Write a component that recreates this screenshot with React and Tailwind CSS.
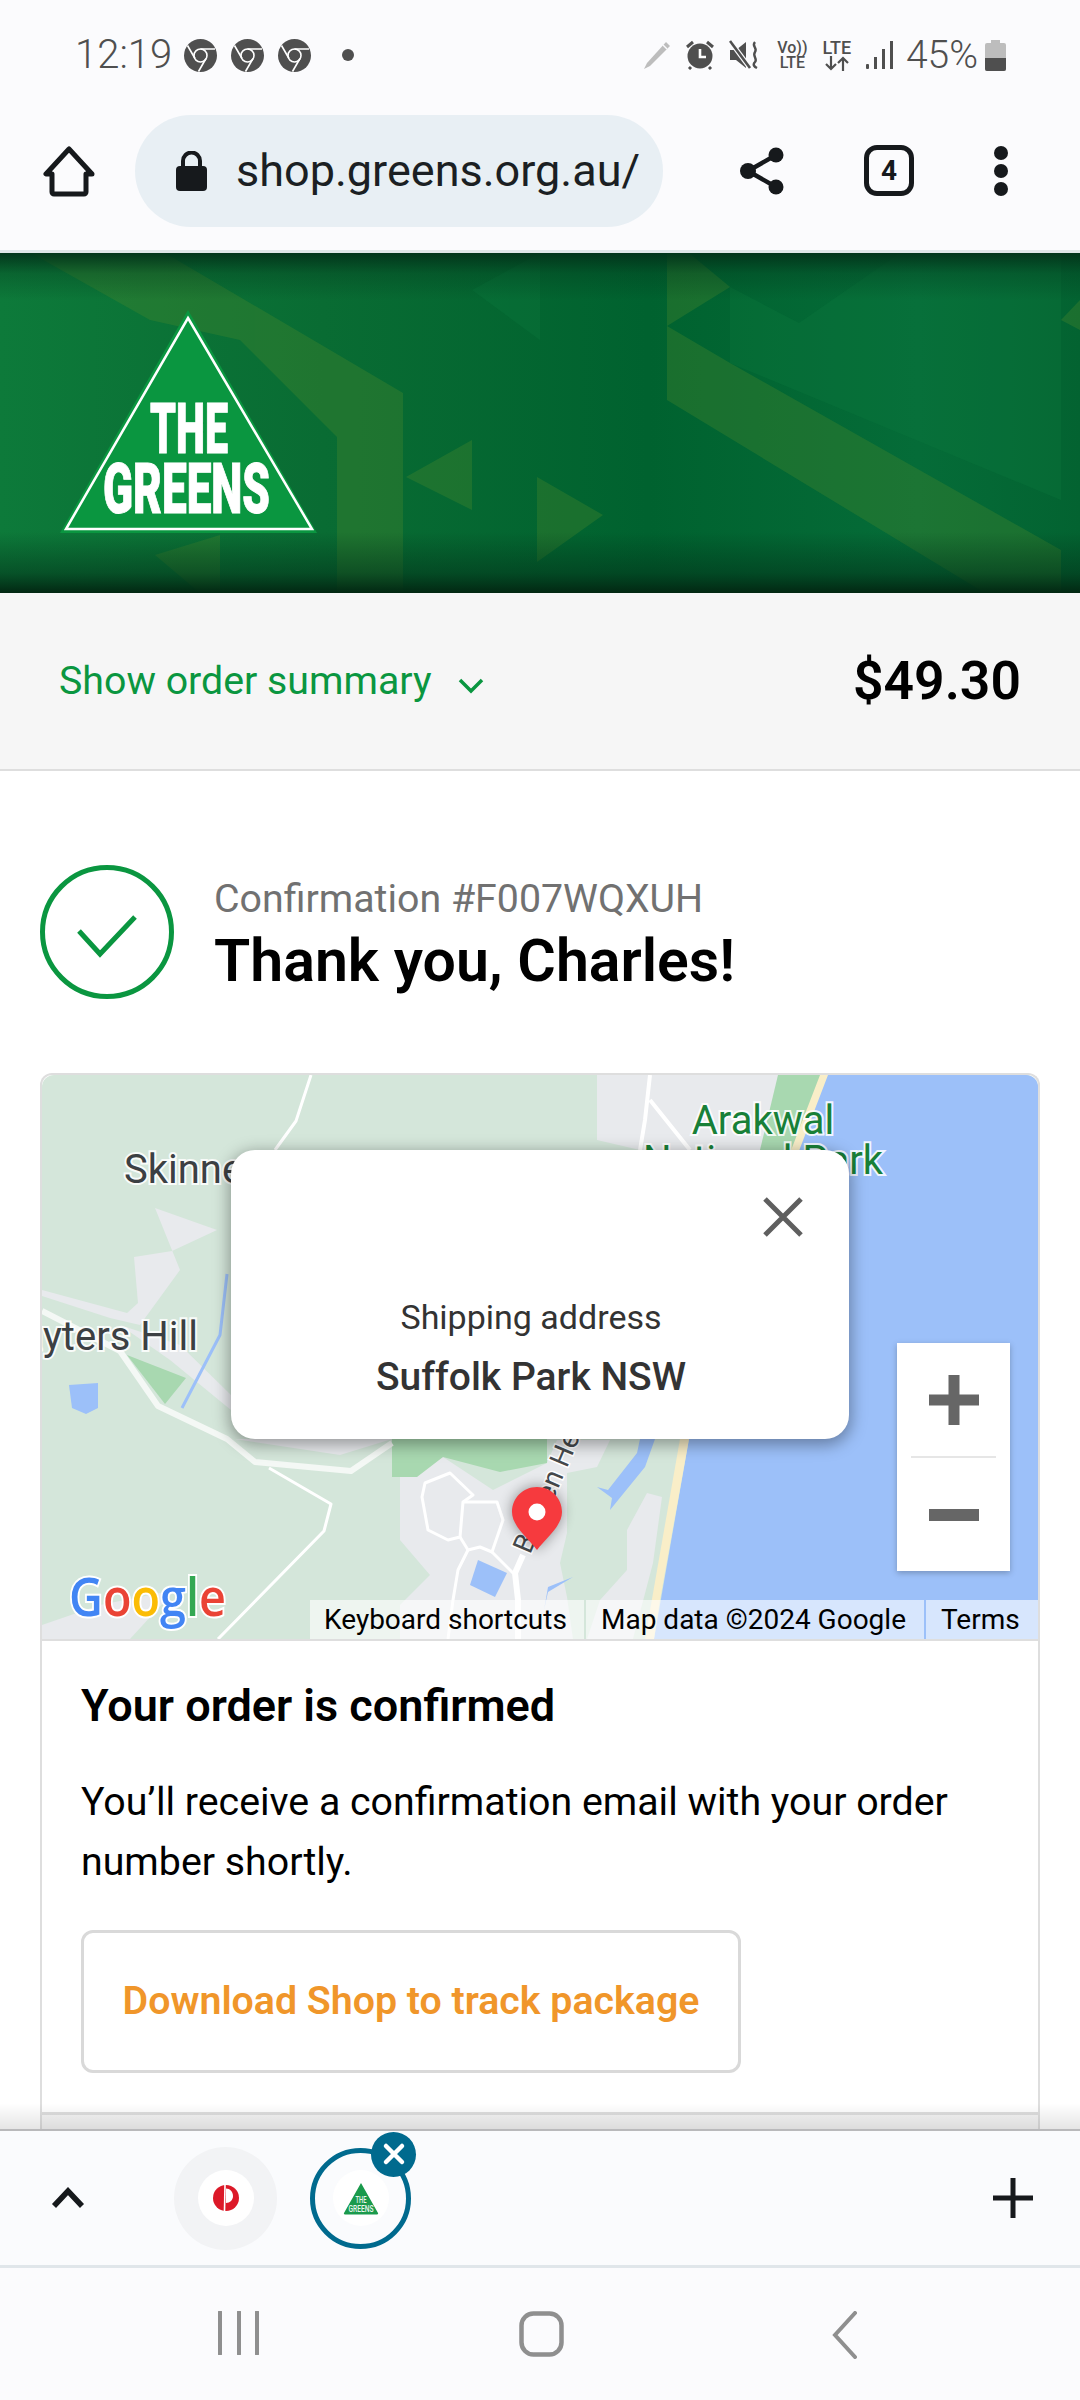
import React from "react";

const FONT = { fontFamily: "Roboto, sans-serif" };

function Chrome() {
  return (
    <svg width="33" height="33" viewBox="0 0 33 33" className="block shrink-0">
      <circle cx="16.5" cy="16.5" r="16.5" fill="#4f4f4f" />
      <circle cx="16.5" cy="16.5" r="6.5" fill="none" stroke="#fff" strokeWidth="1.6" />
      <path d="M16.5 10H31M22 19.5L14.5 32.5M11 19.5L3.5 6.5" stroke="#fff" strokeWidth="1.6" fill="none" />
    </svg>
  );
}

function StatusRight() {
  return (
    <div className="flex items-center">
      <svg width="30" height="30" viewBox="0 0 30 30" className="block">
        <path d="M24 2l4 4L8 26l-6 3 3-6z" fill="#bdbdbd" />
        <path d="M21 5l4 4" stroke="#fbfbfd" strokeWidth="1.5" />
      </svg>
      <svg width="30" height="30" viewBox="0 0 30 30" className="block ml-[13px]">
        <circle cx="15" cy="16" r="12.5" fill="#4f4f4f" />
        <path d="M15 9v8h6" stroke="#fff" strokeWidth="2.6" fill="none" />
        <path d="M2 7l6-5M28 7l-6-5" stroke="#4f4f4f" strokeWidth="3" />
        <path d="M6 27l-2 2M24 27l2 2" stroke="#4f4f4f" strokeWidth="3" />
      </svg>
      <svg width="30" height="30" viewBox="0 0 30 30" className="block ml-[14px]">
        <path d="M1 10h6l10-8v26l-10-8H1z" fill="#4f4f4f" />
        <path d="M1 1l20 27" stroke="#fbfbfd" strokeWidth="5" />
        <path d="M1 1l20 27" stroke="#4f4f4f" strokeWidth="2.6" />
        <path d="M26 2c-4 4 3 6 0 10s3 7 0 10 0 5 2 6" stroke="#4f4f4f" strokeWidth="2.4" fill="none" />
      </svg>
      <div className="ml-[17px] flex w-[33px] flex-col items-center text-[#4f4f4f] leading-[15px] text-[16px] font-medium">
        <span className="whitespace-nowrap">Vo))</span>
        <span>LTE</span>
      </div>
      <div className="ml-[11px] flex w-[34px] flex-col items-center text-[#4f4f4f]">
        <span className="text-[18px] font-medium leading-[17px]">LTE</span>
        <svg width="26" height="15" viewBox="0 0 26 15" className="block">
          <path d="M7 0v13M2 8l5 5 5-5M19 15V2M14 7l5-5 5 5" stroke="#4f4f4f" strokeWidth="2.2" fill="none" />
        </svg>
      </div>
      <svg width="27" height="30" viewBox="0 0 27 30" className="block ml-[12px]">
        <rect x="0" y="24" width="3" height="5" rx="1" fill="#4f4f4f" />
        <rect x="8" y="17" width="3" height="12" fill="#4f4f4f" />
        <rect x="16" y="9" width="3" height="20" fill="#4f4f4f" />
        <rect x="24" y="1" width="3" height="28" fill="#4f4f4f" />
      </svg>
      <span className="ml-[13px] text-[39px] font-light leading-none text-[#4f4f4f]">45%</span>
      <svg width="21" height="31" viewBox="0 0 21 31" className="block ml-[7px]">
        <path d="M6 0h9v3h4a2 2 0 012 2v24a2 2 0 01-2 2H2a2 2 0 01-2-2V5a2 2 0 012-2h4z" fill="#bdbdbd" />
        <path d="M0 18h21v11a2 2 0 01-2 2H2a2 2 0 01-2-2z" fill="#4f4f4f" />
      </svg>
    </div>
  );
}

function Toolbar() {
  return (
    <div className="flex h-[173px] items-center border-b-[3px] border-[#dfe7e8] pt-[11px]">
      <svg width="52" height="52" viewBox="0 0 52 52" className="ml-[43px] block shrink-0">
        <path d="M26 4L3 29h6v18a2 2 0 002 2h30a2 2 0 002-2V29h6z" fill="none" stroke="#16191c" strokeWidth="5" strokeLinejoin="round" />
      </svg>
      <div className="ml-[40px] flex h-[112px] w-[528px] shrink-0 items-center rounded-full bg-[#e8eff4]">
        <svg width="31" height="40" viewBox="0 0 31 40" className="ml-[41px] block shrink-0">
          <path d="M7 17v-7a8.5 8.5 0 0117 0v7" fill="none" stroke="#16191c" strokeWidth="4" />
          <rect x="0" y="15" width="31" height="25" rx="4" fill="#16191c" />
        </svg>
        <span className="ml-[29px] text-[45px] leading-none text-[#1b1f23]">shop.greens.org.au/</span>
      </div>
      <svg width="44" height="48" viewBox="0 0 44 48" className="ml-[77px] block shrink-0">
        <path d="M36 8L8 24l28 16" stroke="#16191c" strokeWidth="4.5" fill="none" />
        <circle cx="36" cy="8" r="7.5" fill="#16191c" />
        <circle cx="8" cy="24" r="8" fill="#16191c" />
        <circle cx="36" cy="40" r="7.5" fill="#16191c" />
      </svg>
      <div className="ml-[80px] flex h-[51px] w-[50px] shrink-0 items-center justify-center rounded-[13px] border-[5px] border-[#16191c] text-[28px] font-bold leading-none text-[#16191c]">
        4
      </div>
      <div className="ml-[80px] flex shrink-0 flex-col gap-[4px]">
        <div className="h-[14px] w-[14px] rounded-full bg-[#16191c]" />
        <div className="h-[14px] w-[14px] rounded-full bg-[#16191c]" />
        <div className="h-[14px] w-[14px] rounded-full bg-[#16191c]" />
      </div>
    </div>
  );
}

function Banner() {
  return (
    <svg width="1080" height="340" viewBox="0 253 1080 340" className="block shrink-0">
      <defs>
        <linearGradient id="base" x1="0" x2="1" y1="0" y2="0">
          <stop offset="0" stopColor="#0d7a3a" />
          <stop offset="0.3" stopColor="#096c33" />
          <stop offset="0.6" stopColor="#00622f" />
          <stop offset="0.85" stopColor="#056c38" />
          <stop offset="1" stopColor="#036331" />
        </linearGradient>
        <linearGradient id="shade" x1="0" x2="0" y1="0" y2="1">
          <stop offset="0" stopColor="#02331a" stopOpacity="0.95" />
          <stop offset="0.06" stopColor="#02331a" stopOpacity="0.3" />
          <stop offset="0.14" stopColor="#02331a" stopOpacity="0" />
          <stop offset="0.82" stopColor="#02331a" stopOpacity="0" />
          <stop offset="0.94" stopColor="#02331a" stopOpacity="0.55" />
          <stop offset="1" stopColor="#022712" stopOpacity="1" />
        </linearGradient>
      </defs>
      <rect x="0" y="253" width="1080" height="340" fill="url(#base)" />
      <g fill="#4f8a2c" opacity="0.32">
        <path d="M31 253H165L403 393V593H337V437L240 340 150 320z" />
        <path d="M667 253H689L730 287 667 326z" />
        <path d="M667 326L730 363 1061 550V593H985L667 400z" />
        <path d="M537 477L603 515 537 562z" />
        <path d="M406 477L472 440V510z" />
        <path d="M155 555L220 535V593H200z" />
        <path d="M1061 320L1080 300V330z" />
      </g>
      <g fill="#0d7a3f" opacity="0.3">
        <path d="M730 287L799 323 900 253H1061V500L730 363z" />
        <path d="M472 290L540 253V340z" />
      </g>
      <rect x="0" y="253" width="1080" height="340" fill="url(#shade)" />
      <path d="M188 310L317 533H60z" fill="#0a9640" />
      <path d="M188 318L312 529H66z" fill="#0a9640" stroke="#fff" strokeWidth="2.5" />
      <g fill="#fff" stroke="#fff" strokeWidth="1" style={{ fontFamily: "Roboto, sans-serif", fontWeight: 900 }} fontSize="70">
        <text x="150" y="453" textLength="78" lengthAdjust="spacingAndGlyphs">THE</text>
        <text x="103" y="513" textLength="167" lengthAdjust="spacingAndGlyphs">GREENS</text>
      </g>
    </svg>
  );
}

function MapArt() {
  return (
    <svg viewBox="42 1075 996 564" width="996" height="564" className="absolute inset-0 block">
      <rect x="42" y="1075" width="996" height="564" fill="#d4e6da" />
      <g fill="#e8eaed">
        <path d="M597 1075H780L770 1135 760 1150H640L597 1140z" />
        <path d="M155 1208L217 1230 172 1251 134 1257 138 1303 127 1313 42 1290V1296L110 1318 140 1325 180 1270z" />
        <path d="M120 1325L180 1345 231 1395V1410L170 1360z" />
        <path d="M235 1439L340 1455 392 1439z" />
        <path d="M400 1477L443 1457 493 1490 547 1463 557 1440H610L597 1467 567 1473V1533L560 1563 567 1597 573 1639H400V1605L430 1575 400 1540z" />
        <path d="M647 1493L662 1497 653 1563 633 1639H587L600 1600 627 1570V1530z" />
        <path d="M42 1625L100 1605 175 1590 130 1639H42z" />
      </g>
      <g fill="#a8d8b0">
        <path d="M778 1075H822L800 1150H760z" />
        <path d="M127 1355L186 1378 165 1404z" />
        <path d="M392 1439H547V1463L500 1472 443 1457 417 1477H392z" />
      </g>
      <path d="M826 1075H1040V1639H654L689 1439z" fill="#9cc0f9" />
      <path d="M820 1075H828L689 1439 660 1600 654 1639H645L680 1439z" fill="#f9eec8" />
      <g fill="#9cc0f9">
        <path d="M69 1385L98 1383V1408L86 1414 72 1408z" />
        <path d="M478 1560L507 1573 495 1597 470 1585z" />
        <path d="M640 1439H655L645 1467 610 1510 612 1498 597 1487 608 1490 637 1453z" />
        <path d="M548 1587L573 1577 548 1592 544 1610z" />
      </g>
      <path d="M227 1274L220 1335 182 1408" stroke="#9cc0f9" strokeWidth="3" fill="none" />
      <g fill="none" stroke="#fff" strokeLinejoin="round">
        <path d="M311 1075L296 1121 275 1150" strokeWidth="3" />
        <path d="M650 1075L645 1120 640 1150M650 1100L690 1150" strokeWidth="4" />
        <path d="M42 1311L120 1351 158 1406 227 1439 255 1462 351 1471 392 1443" strokeWidth="6" stroke="#f4f8f5" />
        <path d="M269 1468L331 1504 324 1531 218 1639" strokeWidth="3" />
        <path d="M425 1483L450 1473 473 1495 463 1502 460 1537 448 1540 428 1530 422 1497z" strokeWidth="3" />
        <path d="M463 1502L497 1502 503 1520 492 1552 480 1547 468 1550 460 1537" strokeWidth="3" />
        <path d="M468 1550L458 1570 453 1600 448 1639M492 1552L513 1573" strokeWidth="3" />
        <path d="M523 1555L515 1573 518 1600V1639" strokeWidth="6" />
      </g>
      <text
        transform="translate(530 1555) rotate(-67)"
        fontSize="28"
        fill="#45494c"
        style={{ fontFamily: "Roboto, sans-serif", paintOrder: "stroke" }}
        stroke="#fff"
        strokeWidth="3"
      >
        Broken Head Rd
      </text>
      <g style={{ fontFamily: "Roboto, sans-serif", paintOrder: "stroke" }} stroke="#fff" strokeWidth="4" strokeOpacity="0.85">
        <text x="124" y="1183" fontSize="40" fill="#3c4043">Skinners Shoot</text>
        <text x="198" y="1350" fontSize="40" fill="#3c4043" textAnchor="end">Hayters Hill</text>
        <text x="763" y="1134" fontSize="40" fill="#188038" textAnchor="middle">Arakwal</text>
        <text x="883" y="1174" fontSize="40" fill="#188038" textAnchor="end">National Park</text>
      </g>
      <path d="M537 1487c-14 0-25 11-25 25 0 14 16 26 25 38 9-12 25-24 25-38 0-14-11-25-25-25z" fill="#000" opacity="0.4" style={{ filter: "blur(7px)" }} />
      <path d="M537 1487c-14 0-25 11-25 25 0 14 16 26 25 38 9-12 25-24 25-38 0-14-11-25-25-25z" fill="#f63a3e" />
      <circle cx="537" cy="1512" r="8.500" fill="#fff" />
      <g style={{ fontFamily: "'Open Sans', sans-serif", paintOrder: "stroke" }} stroke="#fff" strokeWidth="4" fontSize="52" fontWeight="600">
        <text x="69" y="1616" textLength="157" lengthAdjust="spacingAndGlyphs">
          <tspan fill="#4285f4">G</tspan>
          <tspan fill="#ea4335">o</tspan>
          <tspan fill="#fbbc05">o</tspan>
          <tspan fill="#4285f4">g</tspan>
          <tspan fill="#34a853">l</tspan>
          <tspan fill="#ea4335">e</tspan>
        </text>
      </g>
    </svg>
  );
}

function MapBox() {
  return (
    <div className="relative h-[564px] overflow-hidden rounded-t-[12px]">
      <MapArt />
      <div className="absolute left-[189px] top-[75px] h-[289px] w-[618px] rounded-[24px] bg-white shadow-[0_4px_16px_2px_rgba(0,0,0,0.35)]">
        <svg width="40" height="40" viewBox="0 0 40 40" className="absolute left-[532px] top-[47px] block">
          <path d="M2 2l36 36M38 2L2 38" stroke="#5f5f5f" strokeWidth="5" fill="none" />
        </svg>
        <div className="flex h-full flex-col items-center pt-[146px] pr-[18px] text-[#333]">
          <span className="text-[34px] leading-[42px]">Shipping address</span>
          <span className="mt-[17px] text-[39px] font-medium leading-[44px]">Suffolk Park NSW</span>
        </div>
      </div>
      <div className="absolute left-[855px] top-[268px] flex h-[228px] w-[113px] flex-col items-center bg-white shadow-[0_2px_6px_rgba(0,0,0,0.25)]">
        <div className="flex h-[113px] w-full items-center justify-center">
          <svg width="50" height="50" viewBox="0 0 50 50" className="block">
            <path d="M0 25h50M25 0v50" stroke="#666" strokeWidth="11" />
          </svg>
        </div>
        <div className="h-[2px] w-[85px] bg-[#e6e6e6]" />
        <div className="flex h-[113px] w-full items-center justify-center">
          <svg width="50" height="12" viewBox="0 0 50 12" className="block">
            <rect width="50" height="12" fill="#666" />
          </svg>
        </div>
      </div>
      <div className="absolute bottom-0 right-0 flex h-[39px] gap-[2px] text-[28px] leading-[39px] text-black">
        <span className="w-[274px] whitespace-nowrap bg-white/60 pl-[14px]">Keyboard shortcuts</span>
        <span className="w-[338px] whitespace-nowrap bg-white/60 pl-[15px]">Map data ©2024 Google</span>
        <span className="w-[112px] whitespace-nowrap bg-white/60 pl-[15px]">Terms</span>
      </div>
    </div>
  );
}

function BottomTabs() {
  return (
    <div className="relative flex h-[139px] shrink-0 items-center border-t-2 border-b-[3px] border-t-[#b9b9bb] border-b-[#e0e6ea] bg-[#fafbfd]">
      <div className="absolute inset-x-0 top-[-28px] h-[26px] bg-linear-to-b from-black/0 to-black/10" />
      <svg width="34" height="22" viewBox="0 0 34 22" className="ml-[51px] block shrink-0">
        <path d="M3 19L17 4l14 15" stroke="#16191c" strokeWidth="5.5" fill="none" strokeLinejoin="miter" />
      </svg>
      <div className="ml-[89px] flex h-[103px] w-[103px] shrink-0 items-center justify-center rounded-full bg-[#f2f3f5]">
        <div className="flex h-[56px] w-[56px] items-center justify-center rounded-full bg-white">
          <svg width="26" height="26" viewBox="0 0 26 26" className="block">
            <circle cx="13" cy="13" r="13" fill="#dc1928" />
            <path d="M12 0L11.500 26" stroke="#fff" strokeWidth="1.6" />
            <path d="M13 3.500C17 3.500 20 7 20 11c0 4-3 7-7 7z" fill="#fff" />
          </svg>
        </div>
      </div>
      <div className="relative ml-[33px] flex h-[101px] w-[101px] shrink-0 items-center justify-center rounded-full border-[5px] border-[#006a8e]">
        <div className="flex h-[56px] w-[56px] items-center justify-center rounded-full bg-white">
          <svg width="36" height="33" viewBox="0 0 36 33" className="block">
            <path d="M18 1L35 31a1 1 0 01-1 1.500H2a1 1 0 01-1-1.500z" fill="#1a9a4c" />
            <text x="18" y="21" fontSize="9" fontWeight="500" fill="#e8f5ec" textAnchor="middle" textLength="11" lengthAdjust="spacingAndGlyphs" style={{ fontFamily: "Roboto, sans-serif" }}>THE</text>
            <text x="18" y="29.500" fontSize="9" fontWeight="500" fill="#e8f5ec" textAnchor="middle" textLength="25" lengthAdjust="spacingAndGlyphs" style={{ fontFamily: "Roboto, sans-serif" }}>GREENS</text>
          </svg>
        </div>
        <div className="absolute left-[56px] top-[-21px] flex h-[45px] w-[45px] items-center justify-center rounded-full bg-[#006a8e]">
          <svg width="24" height="24" viewBox="0 0 24 24" className="block">
            <path d="M4 4l16 16M20 4L4 20" stroke="#fff" strokeWidth="4.5" strokeLinecap="round" />
          </svg>
        </div>
      </div>
      <svg width="40" height="40" viewBox="0 0 40 40" className="ml-auto mr-[47px] block shrink-0">
        <path d="M0 20h40M20 0v40" stroke="#16191c" strokeWidth="5" />
      </svg>
    </div>
  );
}

function NavBar() {
  return (
    <div className="relative flex h-[132px] shrink-0 items-start bg-[#fbfbfd] pt-[43px]">
      <svg width="41" height="44" viewBox="0 0 41 44" className="ml-[218px] block shrink-0">
        <path d="M2 1v42M21 1v42M39 1v42" stroke="#8f8f8f" strokeWidth="4" strokeLinecap="round" />
      </svg>
      <svg width="45" height="46" viewBox="0 0 45 46" className="ml-[260px] block shrink-0">
        <rect x="2.500" y="2.500" width="40" height="41" rx="12" fill="none" stroke="#8f8f8f" strokeWidth="4.500" />
      </svg>
      <svg width="26" height="48" viewBox="0 0 26 48" className="ml-[268px] block shrink-0">
        <path d="M23 2L3 24l20 22" stroke="#8f8f8f" strokeWidth="4" fill="none" strokeLinecap="round" />
      </svg>
    </div>
  );
}

export default function App() {
  return (
    <div className="relative flex h-[2400px] w-[1080px] flex-col overflow-hidden bg-white" style={FONT}>
      <div className="bg-[#fbfbfd]">
        <div className="flex h-[80px] items-center justify-between pt-[30px] pl-[75px] pr-[74px]">
          <div className="flex items-center">
            <span className="text-[40px] font-light leading-none text-[#4f4f4f]">12:19</span>
            <div className="ml-[12px] flex gap-[14px]">
              <Chrome />
              <Chrome />
              <Chrome />
            </div>
            <div className="ml-[31px] h-[12px] w-[12px] rounded-full bg-[#4f4f4f]" />
          </div>
          <StatusRight />
        </div>
        <Toolbar />
      </div>
      <Banner />
      <div className="flex h-[178px] shrink-0 items-center border-b-2 border-[#dedede] bg-[#f6f6f6] pl-[59px] pr-[59px]">
        <span className="mt-[2px] text-[39.300px] leading-none text-[#0a9640]">Show order summary</span>
        <svg width="26" height="16" viewBox="0 0 26 16" className="ml-[26px] mt-[10px] block">
          <path d="M2 2l11 11L24 2" stroke="#0a9640" strokeWidth="3.500" fill="none" />
        </svg>
        <span className="ml-auto text-[53.500px] font-semibold leading-none text-black">$49.30</span>
      </div>
      <div className="min-h-0 flex-1 overflow-hidden px-[40px] pt-[94px]">
        <div className="flex items-center">
          <svg width="134" height="134" viewBox="0 0 134 134" className="block shrink-0">
            <circle cx="67" cy="67" r="64.500" fill="none" stroke="#0a9640" strokeWidth="5" />
            <path d="M39 66l21 23 35-37" fill="none" stroke="#0a9640" strokeWidth="5" />
          </svg>
          <div className="ml-[40px] mt-[7px] flex flex-col">
            <span className="text-[39.300px] leading-[44px] text-[#717171]">Confirmation #F007WQXUH</span>
            <span className="mt-[6px] text-[59px] font-semibold leading-[68px] text-black">Thank you, Charles!</span>
          </div>
        </div>
        <div className="mt-[74px] rounded-t-[12px] border-2 border-b-0 border-[#dedede]">
          <MapBox />
          <div className="border-t-2 border-[#dedede] px-[39px] pt-[39px]">
            <div className="text-[45px] font-semibold leading-[52px] text-black">Your order is confirmed</div>
            <p className="mt-[40px] text-[39.300px] leading-[60px] text-black">
              You’ll receive a confirmation email with your order
              <br />
              number shortly.
            </p>
            <div className="mt-[38px] flex h-[143px] w-[660px] items-center justify-center rounded-[12px] border-[3px] border-[#d9d9d9] text-[39.300px] font-semibold leading-none text-[#f0962a]">
              Download Shop to track package
            </div>
          </div>
          <div className="mt-[39px] h-[60px] border-t-[3px] border-[#dedede] bg-[#f5f5f5]" />
        </div>
      </div>
      <BottomTabs />
      <NavBar />
    </div>
  );
}
